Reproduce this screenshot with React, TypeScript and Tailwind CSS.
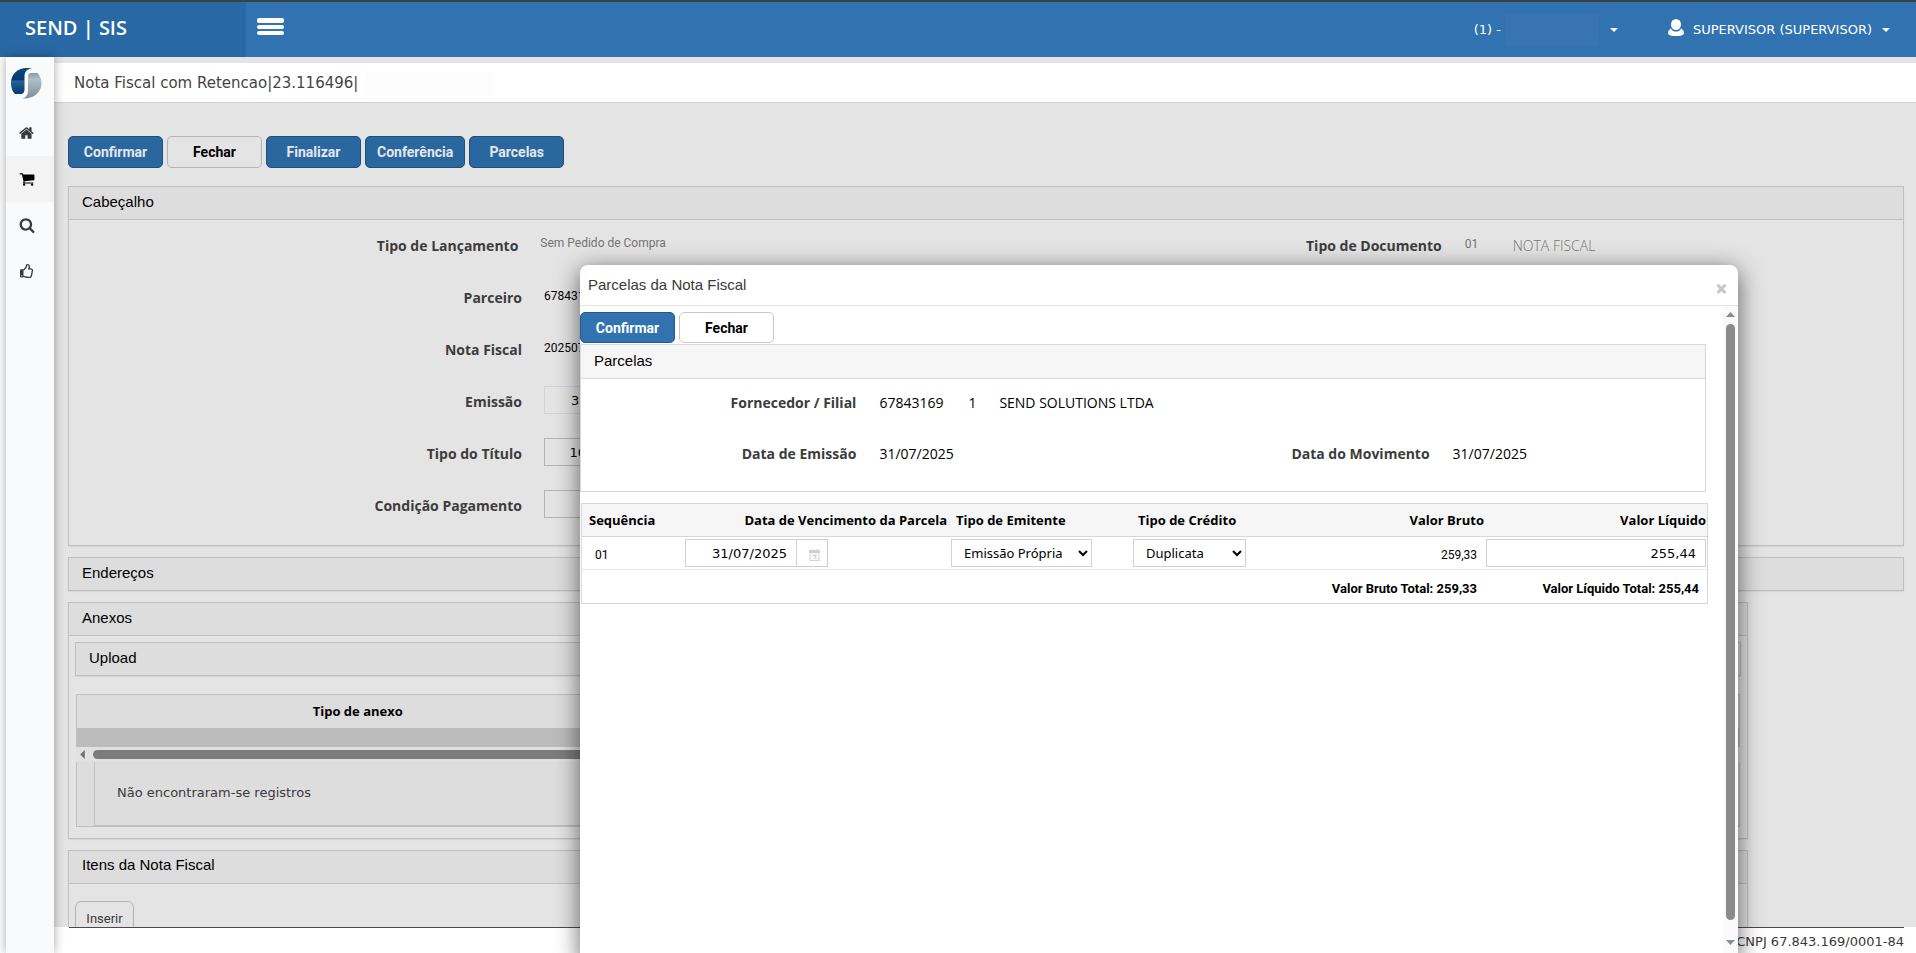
import React from "react";
import { FaRegThumbsUp } from "react-icons/fa";

const HOME =
  "M1408 992v480q0 26-19 45t-45 19h-384v-384h-256v384h-384q-26 0-45-19t-19-45v-480q0-1 .5-3t.5-3l575-474 575 474q1 2 1 6zm223-69l-62 74q-8 9-21 11h-3q-13 0-21-7l-692-577-692 577q-12 8-24 7-13-2-21-11l-62-74q-8-10-7-23.5t11-21.5l719-599q32-26 76-26t76 26l244 204v-195q0-14 9-23t23-9h192q14 0 23 9t9 23v408l219 182q10 8 11 21.5t-7 23.5z";
const CART =
  "M704 1536q0 52-38 90t-90 38-90-38-38-90 38-90 90-38 90 38 38 90zm896 0q0 52-38 90t-90 38-90-38-38-90 38-90 90-38 90 38 38 90zm128-1088v512q0 24-16.5 42.5t-40.5 21.5l-1044 122q13 60 13 70 0 16-24 64h920q26 0 45 19t19 45-19 45-45 19h-1024q-26 0-45-19t-19-45q0-11 8-31.5t16-36 21.5-40 15.5-29.5l-177-823h-204q-26 0-45-19t-19-45 19-45 45-19h256q16 0 28.5 6.5t19.5 15.5 13 24.5 8 26 5.5 29.5 4.5 26h1201q26 0 45 19t19 45z";
const SEARCH =
  "M1216 832q0-185-131.5-316.5t-316.5-131.5-316.5 131.5-131.5 316.5 131.5 316.5 316.5 131.5 316.5-131.5 131.5-316.5zm512 832q0 52-38 90t-90 38q-54 0-90-38l-343-342q-179 124-399 124-143 0-273.5-55.5t-225-150-150-225-55.5-273.5 55.5-273.5 150-225 225-150 273.5-55.5 273.5 55.5 225 150 150 225 55.5 273.5q0 220-124 399l343 343q37 37 37 90z";

function Glyph({ d }: { d: string }) {
  return (
    <svg viewBox="0 0 1792 1792" className="size-4" fill="currentColor" aria-hidden="true">
      <path d={d} />
    </svg>
  );
}

function Logo() {
  return (
    <svg viewBox="0 0 32 32" className="size-8" aria-hidden="true">
      <defs>
        <linearGradient id="logoBlue" x1="0" y1="0" x2="0" y2="1">
          <stop offset="0" stopColor="#0b4a80" />
          <stop offset="0.45" stopColor="#02396b" />
          <stop offset="0.5" stopColor="#2a6297" />
          <stop offset="1" stopColor="#003a6e" />
        </linearGradient>
        <linearGradient id="logoGrey" x1="0" y1="0" x2="0" y2="1">
          <stop offset="0" stopColor="#8c9aa3" />
          <stop offset="0.25" stopColor="#b3bfc7" />
          <stop offset="1" stopColor="#7d8d98" />
        </linearGradient>
      </defs>
      <path d="M18.5 1 C8 0 1 7 1 16 C1 21 2.5 24.5 5 27 L10 27 C13.5 27 14.5 25 14.5 22 L14.5 9.5 C14.5 4.5 17 2 22 1.500 Z" fill="url(#logoBlue)" />
      <path d="M21 6 L27.500 6 C29.500 8.500 31.500 12 31.500 16 C31.500 25 24 32 13 31.500 C17 29.500 18 27 18 23 L18 9.500 C18 7.500 19 6 21 6 Z" fill="url(#logoGrey)" />
    </svg>
  );
}

function Caret() {
  return (
    <svg viewBox="0 0 8 4" className="h-1 w-2" fill="currentColor" aria-hidden="true">
      <path d="M0 0h8L4 4z" />
    </svg>
  );
}

const primary = "border-[#1d4f80] bg-[#2b679f] text-[#e4e8ec]";
const plain = "border-[#b4b4b4] bg-[#e4e4e4] text-black";
const modalPrimary = "border-[#235a8c] bg-[#3173b0] text-white";
const modalPlain = "border-[#c8c8c8] bg-white text-black";

function Btn({ tone, children }: { tone: string; children: React.ReactNode }) {
  return (
    <button type="button" className={`min-w-[95px] rounded-[5px] border px-[11px] font-[Roboto,sans-serif] text-sm font-bold ${tone}`}>
      {children}
    </button>
  );
}

function Panel({ title, className = "", children }: { title: string; className?: string; children?: React.ReactNode }) {
  return (
    <section className={`border border-[#c0c0c0] shadow-[0_1px_1px_rgba(0,0,0,0.06)] ${className}`}>
      <h2 className="flex h-8 items-center bg-[#dddddd] px-[13px] pb-0.5 font-[Liberation_Sans,Arial,sans-serif] text-[15px] text-black">{title}</h2>
      {children && <div className="border-t border-[#c0c0c0]">{children}</div>}
    </section>
  );
}

const labelText = "font-[Open_Sans,sans-serif] text-sm font-bold text-[#3c3c3c]";
const field = "h-7 border border-[#b4b4b4] bg-transparent font-[DejaVu_Sans,Verdana,sans-serif] text-[13px] text-black";

function FormRow({ label, htmlFor, children }: { label: string; htmlFor?: string; children?: React.ReactNode }) {
  return (
    <div className="flex h-[52px] items-center">
      <label htmlFor={htmlFor} className={`w-[24.700%] text-right ${labelText}`}>{label}</label>
      <div className="ml-[22px] pb-1 font-[Roboto,sans-serif] text-xs text-black">{children}</div>
    </div>
  );
}

function Header() {
  return (
    <header className="flex h-[57px] shrink-0 items-stretch border-t-2 border-[#3c3f44] bg-[#3173b0] text-white">
      <div className="flex w-[246px] items-center bg-[#2869a5] pb-1 pl-[25px] font-[Open_Sans,sans-serif] text-xl font-semibold">SEND | SIS</div>
      <button type="button" aria-label="Menu" className="ml-[11px] mt-4 flex h-[17px] w-[27px] flex-col justify-between">
        <span className="h-[5px] w-full rounded-xs bg-white" />
        <span className="h-1 w-full rounded-xs bg-white" />
        <span className="h-1 w-full rounded-xs bg-white" />
      </button>
      <div className="ml-auto flex items-center pr-[26px] font-[DejaVu_Sans,Verdana,sans-serif] text-[13px]">
        <button type="button" className="flex items-center">
          <span>(1) -</span>
          <span className="ml-1 h-8 w-[94px] bg-[#3974b0]" />
          <span className="ml-[11px]"><Caret /></span>
        </button>
        <button type="button" className="ml-[50px] flex items-center">
          <svg viewBox="0 0 16 17" className="mb-1 mr-[9px] h-[17px] w-4" fill="currentColor" aria-hidden="true">
            <ellipse cx="8" cy="5.500" rx="5" ry="5.500" />
            <path d="M3 9.500 C4 12 6 12.500 8 12.500 S12 12 13 9.500 C15 10.500 16 12.500 16 14 C16 16.500 12 17 8 17 S0 16.500 0 14 C0 12.500 1 10.500 3 9.500z" />
          </svg>
          <span>SUPERVISOR (SUPERVISOR)</span>
          <span className="ml-[10px]"><Caret /></span>
        </button>
      </div>
    </header>
  );
}

function Sidebar() {
  const item = "flex h-[46px] items-center justify-center pr-[6px]";
  return (
    <div className="z-10 flex w-[54px] shrink-0 bg-white pl-[6px]">
      <nav className="flex-1 bg-[#f9fafc] pt-[10px] text-[#3a3a3a] shadow-[0_0_10px_rgba(0,0,0,0.35)]">
        <a href="#inicio" aria-label="SEND" className="flex h-[43px] items-start pl-1"><Logo /></a>
        <a href="#home" aria-label="Início" className={item}><Glyph d={HOME} /></a>
        <a href="#compras" aria-label="Compras" className={`${item} bg-[#f3f3f3] text-black`}><Glyph d={CART} /></a>
        <a href="#pesquisa" aria-label="Pesquisa" className={item}><Glyph d={SEARCH} /></a>
        <a href="#aprovar" aria-label="Aprovar" className={item}><FaRegThumbsUp className="size-[14px]" /></a>
      </nav>
    </div>
  );
}

function Attachments() {
  return (
    <div className="px-[6px] pb-[11px] pt-[6px]">
      <Panel title="Upload" />
      <div className="mt-[18px] px-px">
        <table className="w-full table-fixed border-collapse border border-b-0 border-[#c0c0c0] bg-[#dddddd]">
          <thead>
            <tr className="h-[33px]">
              <th className="w-[562px] font-[Open_Sans,sans-serif] text-[13px] font-bold text-black">Tipo de anexo</th>
              <th />
            </tr>
          </thead>
          <tbody>
            <tr className="h-[19px] bg-[#bcbcbc]"><td colSpan={2} /></tr>
          </tbody>
        </table>
        <div className="flex h-[15px] items-center gap-2 bg-[#e1e1e1] px-1" aria-hidden="true">
          <svg viewBox="0 0 4 8" className="h-[9px] w-[5px]" fill="#6e6e6e"><path d="M4 0v8L0 4z" /></svg>
          <div className="h-[9px] flex-1 rounded-full bg-[#7c7c7c]" />
          <svg viewBox="0 0 4 8" className="h-[9px] w-[5px]" fill="#6e6e6e"><path d="M0 0v8l4-4z" /></svg>
        </div>
        <div className="border border-t-0 border-[#c0c0c0] bg-[#dddddd] pl-[17px]">
          <p className="flex h-16 items-center border-b border-l border-[#c0c0c0] pl-[22px] font-[DejaVu_Sans,Verdana,sans-serif] text-[13px] text-[#3a3a3a]">Não encontraram-se registros</p>
        </div>
      </div>
    </div>
  );
}

function ModalRow({ children }: { children: React.ReactNode }) {
  return <div className="grid h-12 grid-cols-2 items-center font-[Open_Sans,sans-serif] text-sm text-black">{children}</div>;
}

function Installments() {
  const th = "font-[Open_Sans,sans-serif] text-[13px] font-bold text-black";
  const input = "h-7 border border-[#d2d2d2] bg-white font-[DejaVu_Sans,Verdana,sans-serif] text-[13px] text-black";
  const select = "h-7 border border-[#d2d2d2] bg-white pl-2 font-[Noto_Sans,sans-serif] text-[13px] text-black";
  return (
    <table className="ml-px mt-[11px] w-[calc(100%-16px)] table-fixed border-separate border-spacing-0 border border-[#d8d8d8]">
      <thead>
        <tr className="h-[33px] bg-[#f6f6f6] [&>th]:border-b [&>th]:border-[#d8d8d8] [&>th]:pt-[2px]">
          <th className={`w-[103px] pl-[7px] text-left ${th}`}>Sequência</th>
          <th className={`w-[266px] pr-1 text-right ${th}`}>Data de Vencimento da Parcela</th>
          <th className={`w-[182px] pl-[5px] text-left ${th}`}>Tipo de Emitente</th>
          <th className={`w-[130px] pl-[5px] text-left ${th}`}>Tipo de Crédito</th>
          <th className={`pr-[2px] text-right ${th}`}>Valor Bruto</th>
          <th className={`w-[221px] pr-px text-right ${th}`}>Valor Líquido</th>
        </tr>
      </thead>
      <tbody>
        <tr className="h-[33px] [&>td]:border-b [&>td]:border-[#e6e6e6] [&>td]:p-0">
          <td><span className="ml-[13px] font-[Roboto,sans-serif] text-xs">01</span></td>
          <td>
            <div className="flex">
              <input aria-label="Data de Vencimento da Parcela" defaultValue="31/07/2025" className={`${input} w-[112px] pr-[9px] text-right`} />
              <button type="button" aria-label="Abrir calendário" className="flex h-7 w-[31px] items-center justify-center border border-l-0 border-[#cccccc] bg-white pl-1 pt-1">
                <svg viewBox="0 0 11 12" className="h-3 w-[11px]" aria-hidden="true">
                  <rect x="1" y="2" width="9" height="9.500" fill="#f6f6f6" stroke="#d4d4d4" />
                  <rect x="0" y="1" width="11" height="3" fill="#cfcfcf" />
                  <path d="M3 0v2M8 0v2" stroke="#d4d4d4" />
                  <path d="M4 6.500h3L5.500 10" fill="none" stroke="#c9c9c9" />
                </svg>
              </button>
            </div>
          </td>
          <td>
            <select aria-label="Tipo de Emitente" className={`${select} w-[141px]`} defaultValue="p"><option value="p">Emissão Própria</option></select>
          </td>
          <td>
            <select aria-label="Tipo de Crédito" className={`${select} w-[113px]`} defaultValue="d"><option value="d">Duplicata</option></select>
          </td>
          <td className="text-right"><span className="mr-[9px] font-[Roboto,sans-serif] text-xs">259,33</span></td>
          <td>
            <input aria-label="Valor Líquido" defaultValue="255,44" className={`${input} block w-[220px] pr-[9px] text-right`} />
          </td>
        </tr>
        <tr className="h-[33px] font-[Roboto,sans-serif] text-[13px] font-bold text-black">
          <td colSpan={5} className="pr-[9px] pt-1 text-right">Valor Bruto Total: 259,33</td>
          <td className="pr-2 pt-1 text-right">Valor Líquido Total: 255,44</td>
        </tr>
      </tbody>
    </table>
  );
}

function Modal() {
  return (
    <div role="dialog" aria-labelledby="modalTitle" className="absolute -bottom-2 left-[580px] right-[178px] top-[265px] z-20 flex flex-col overflow-visible rounded-t-lg bg-white shadow-[0_5px_25px_rgba(0,0,0,0.6)]">
      <div className="flex h-[41px] shrink-0 items-center justify-between border-b border-[#e5e5e5] pl-2 pr-[10px]">
        <h1 id="modalTitle" className="font-[Liberation_Sans,Arial,sans-serif] text-[15px] text-[#3a3a3a]">Parcelas da Nota Fiscal</h1>
        <button type="button" aria-label="Fechar janela" className="pt-[5px] font-[Open_Sans,sans-serif] text-[22px] font-extrabold leading-none text-[#c8c8c8]">×</button>
      </div>
      <div className="flex min-h-0 flex-1">
        <div className="min-w-0 flex-1 pt-[6px]">
          <div className="flex h-[31px] gap-1">
            <Btn tone={modalPrimary}>Confirmar</Btn>
            <Btn tone={modalPlain}>Fechar</Btn>
          </div>
          <section className="mr-[17px] mt-px border border-[#d8d8d8]">
            <h2 className="flex h-[34px] items-center border-b border-[#d8d8d8] bg-[#f6f6f6] px-[13px] pb-px font-[Liberation_Sans,Arial,sans-serif] text-[15px] text-black">Parcelas</h2>
            <div className="flex flex-col gap-[3px] pb-[13px]">
              <ModalRow>
                <div className="flex items-center whitespace-nowrap [&>*]:shrink-0">
                  <span className={`w-[49%] text-right ${labelText}`}>Fornecedor / Filial</span>
                  <span className="ml-[23px] w-[89px]">67843169</span>
                  <span className="w-[31px]">1</span>
                  <span>SEND SOLUTIONS LTDA</span>
                </div>
              </ModalRow>
              <ModalRow>
                <div className="flex items-center">
                  <span className={`w-[49%] text-right ${labelText}`}>Data de Emissão</span>
                  <span className="ml-[23px]">31/07/2025</span>
                </div>
                <div className="flex items-center">
                  <span className={`w-[51%] text-right ${labelText}`}>Data do Movimento</span>
                  <span className="ml-[23px]">31/07/2025</span>
                </div>
              </ModalRow>
            </div>
          </section>
          <Installments />
        </div>
        <div className="flex w-[15px] shrink-0 flex-col items-center bg-[#fafafa] pb-4 pt-[6px]" aria-hidden="true">
          <svg viewBox="0 0 9 5" className="h-[5px] w-[9px] shrink-0" fill="#8b8b8b"><path d="M0 5h9L4.500 0z" /></svg>
          <div className="mb-5 mt-[7px] w-[9px] flex-1 rounded-full bg-[#8b8b8b]" />
          <svg viewBox="0 0 9 5" className="h-[5px] w-[9px] shrink-0" fill="#8b8b8b"><path d="M0 0h9L4.500 5z" /></svg>
        </div>
      </div>
    </div>
  );
}

export default function App() {
  return (
    <div className="relative flex h-screen flex-col overflow-hidden bg-white">
      <Header />
      <div className="flex min-h-0 flex-1">
        <Sidebar />
        <main className="flex min-w-0 flex-1 flex-col bg-[#e4e4e4] pt-[6px]">
          <div className="flex h-10 shrink-0 items-center border-b border-[#d0d0d0] bg-white pl-5 pt-[2px] font-[DejaVu_Sans,Verdana,sans-serif] text-[15px] text-[#444444]">
            <span>Nota Fiscal com Retencao|23.116496|</span>
            <span className="ml-2 h-6 w-[126px] bg-[#fcfcfc]" />
          </div>
          <div className="flex min-h-0 flex-1 flex-col gap-[11px] overflow-hidden pl-[14px] pr-3 pt-[33px] [&>*]:shrink-0">
            <div className="mb-[7px] flex h-8 gap-1">
              <Btn tone={primary}>Confirmar</Btn>
              <Btn tone={plain}>Fechar</Btn>
              <Btn tone={primary}>Finalizar</Btn>
              <Btn tone={primary}>Conferência</Btn>
              <Btn tone={primary}>Parcelas</Btn>
            </div>
            <Panel title="Cabeçalho">
              <div className="pb-[13px]">
                <div className="grid h-[52px] grid-cols-2">
                  <div className="flex items-center">
                    <span className={`w-[49%] text-right ${labelText}`}>Tipo de Lançamento</span>
                    <span className="ml-[22px] pb-[6px] font-[Roboto,sans-serif] text-xs text-[#747474]">Sem Pedido de Compra</span>
                  </div>
                  <div className="flex items-center text-[#747474]">
                    <span className={`w-[49.700%] text-right ${labelText}`}>Tipo de Documento</span>
                    <span className="ml-[23px] w-12 pb-1 font-[Roboto,sans-serif] text-xs">01</span>
                    <span className="font-[Open_Sans,sans-serif] text-sm font-light">NOTA FISCAL</span>
                  </div>
                </div>
                <FormRow label="Parceiro">67843169</FormRow>
                <FormRow label="Nota Fiscal">20250731</FormRow>
                <FormRow label="Emissão" htmlFor="emissao">
                  <input id="emissao" defaultValue="31/07/2025" className={`${field} w-[112px] border-[#d4d4d4] pr-[9px] text-right`} />
                </FormRow>
                <FormRow label="Tipo do Título" htmlFor="titulo">
                  <input id="titulo" defaultValue="10" className={`${field} w-[52px] pr-[9px] text-right`} />
                </FormRow>
                <FormRow label="Condição Pagamento" htmlFor="condicao">
                  <input id="condicao" className={`${field} w-[52px]`} />
                </FormRow>
              </div>
            </Panel>
            <Panel title="Endereços" />
            <Panel title="Anexos" className="w-[91.500%]">
              <Attachments />
            </Panel>
            <Panel title="Itens da Nota Fiscal" className="w-[91.500%]">
              <div className="h-[110px] px-[6px] pt-[17px]">
                <button type="button" className="h-9 w-[59px] rounded-md border border-[#b4b4b4] font-[Roboto,sans-serif] text-[13px] text-[#3a3a3a]">Inserir</button>
              </div>
            </Panel>
          </div>
          <footer className="h-[26px] shrink-0 bg-white pl-[15px] pr-3">
            <p className="border-t border-[#4a4a4a] pt-1 text-right font-[DejaVu_Sans,Verdana,sans-serif] text-[13px] leading-5 text-[#3a3a3a]">CNPJ 67.843.169/0001-84</p>
          </footer>
        </main>
      </div>
      <Modal />
    </div>
  );
}
